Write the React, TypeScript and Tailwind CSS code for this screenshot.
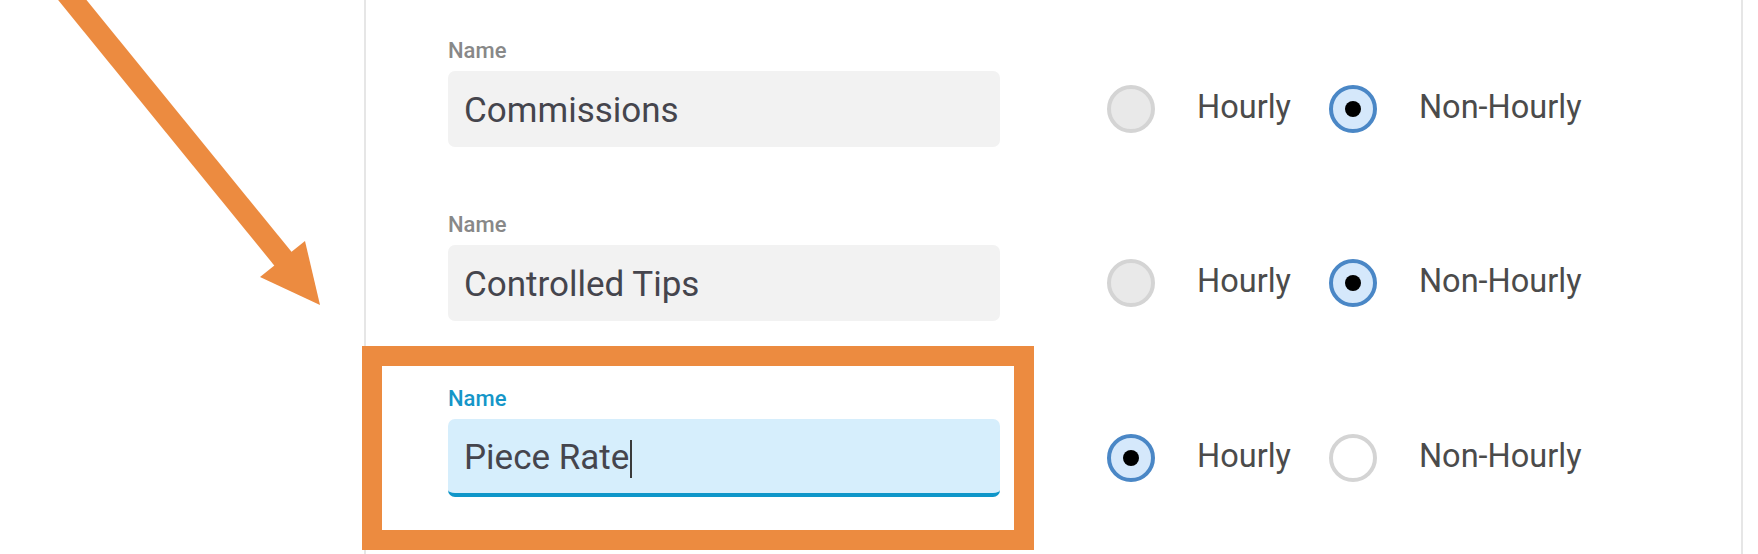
import React from 'react';

type RadioState = 'selected' | 'empty' | 'blank';

interface PayRow {
  name: string;
  focused?: boolean;
  hourly: RadioState;
  nonHourly: RadioState;
}

const rows: PayRow[] = [
  { name: 'Commissions', hourly: 'empty', nonHourly: 'selected' },
  { name: 'Controlled Tips', hourly: 'empty', nonHourly: 'selected' },
  { name: 'Piece Rate', focused: true, hourly: 'selected', nonHourly: 'blank' },
];

const Radio: React.FC<{ state: RadioState; label: string }> = ({ state, label }) => {
  const circle =
    state === 'selected'
      ? 'border-[#4a87c6] bg-[#d5e8fb]'
      : state === 'empty'
        ? 'border-[#d4d4d4] bg-[#e9e9e9]'
        : 'border-[#d4d4d4] bg-white';

  return (
    <div className="flex items-center gap-[42px]">
      <div className={`flex size-[48px] items-center justify-center rounded-full border-4 ${circle}`}>
        {state === 'selected' && <div className="size-[16px] rounded-full bg-black" />}
      </div>
      <span className="pb-[4px] text-[32.5px] leading-none text-[#4b4b4b]">{label}</span>
    </div>
  );
};

const NameField: React.FC<{ value: string; focused?: boolean }> = ({ value, focused }) => (
  <div className="flex w-[552px] flex-col gap-[8px]">
    <span className={`text-[22px] leading-[24px] font-medium ${focused ? 'text-[#1596c8]' : 'text-[#888888]'}`}>
      Name
    </span>
    <div
      className={`flex items-center rounded-[7px] pt-[5px] pl-[16px] text-[35px] text-[#45454d] ${
        focused ? 'h-[78px] border-b-4 border-[#0f96c9] bg-[#d6eefc]' : 'h-[76px] bg-[#f2f2f2]'
      }`}
    >
      <span>{value}</span>
      {focused && <span className="ml-px h-[38px] w-[2px] bg-[#3a3a3a]" />}
    </div>
  </div>
);

export default function App() {
  return (
    <div
      className="relative flex h-[554px] w-[1758px] overflow-hidden bg-white"
      style={{ fontFamily: 'Roboto, "Noto Sans", sans-serif' }}
    >
      <div className="w-[364px] shrink-0" />
      <div className="flex w-[1379px] flex-col gap-[66px] border-x-2 border-[#e6e6e6] pt-[39px] pl-[82px]">
        {rows.map((row) => (
          <div key={row.name} className="flex items-end">
            <NameField value={row.name} focused={row.focused} />
            <div className={`ml-[107px] flex items-center gap-[38px] ${row.focused ? 'h-[78px]' : 'h-[76px]'}`}>
              <Radio state={row.hourly} label="Hourly" />
              <Radio state={row.nonHourly} label="Non-Hourly" />
            </div>
          </div>
        ))}
      </div>

      {/* annotation: highlight box */}
      <div className="pointer-events-none absolute top-[346px] left-[362px] h-[204px] w-[672px] border-[20px] border-[#ec8b40]" />

      {/* annotation: arrow */}
      <svg className="pointer-events-none absolute top-0 left-0" width="400" height="400" viewBox="0 0 400 400">
        <line x1="56" y1="-20" x2="284" y2="260" stroke="#ec8b40" strokeWidth="22" />
        <polygon points="305,241 320,305 260,277" fill="#ec8b40" />
      </svg>
    </div>
  );
}
